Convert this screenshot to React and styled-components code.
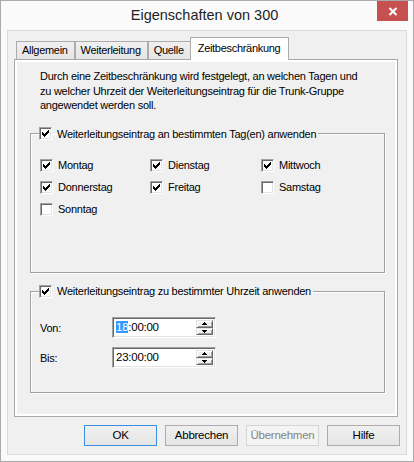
import React from 'react'
import styled, { createGlobalStyle } from 'styled-components'

const ui = `"Liberation Sans", Arial, sans-serif`

const GlobalStyle = createGlobalStyle`
  html, body {
    margin: 0;
    padding: 0;
    background: #fff;
  }
  * { box-sizing: border-box; }
`

const Window = styled.div`
  width: 414px;
  height: 462px;
  border: 1px solid #aaaaaa;
  background: #fafafa;
  display: flex;
  flex-direction: column;
  font-family: ${ui};
  font-size: 11px;
  letter-spacing: -0.25px;
  color: #000;
`

const TitleBar = styled.div`
  height: 29px;
  display: grid;
  grid-template-columns: 1fr auto 1fr;
  align-items: start;
  padding-right: 5px;
`

const Title = styled.div`
  grid-column: 2;
  font-size: 14.5px;
  letter-spacing: 0;
  line-height: 29px;
  color: #1e1e1e;
`

const CloseButton = styled.div`
  grid-column: 3;
  justify-self: end;
  width: 31px;
  height: 20px;
  background: #c75050;
  display: flex;
  align-items: center;
  justify-content: center;
`

const Client = styled.div`
  flex: 1;
  margin: 0 6px 6px;
  border: 1px solid #dadada;
  background: #f0f0f0;
  padding: 6px 8px 8px 6px;
  display: flex;
  flex-direction: column;
`

const TabRow = styled.div`
  height: 22px;
  display: flex;
  align-items: flex-end;
  padding-left: 2px;
`

const Tab = styled.div`
  position: relative;
  height: ${p => (p.$active ? '23px' : '18px')};
  margin-bottom: ${p => (p.$active ? '-1px' : '0')};
  z-index: ${p => (p.$active ? 1 : 0)};
  padding: ${p => (p.$active ? '3px 8px 0 7px' : '1px 6px 0 5px')};
  border: 1px solid #acacac;
  border-bottom: none;
  margin-left: ${p => (p.$active ? '-1px' : '0')};
  background: ${p => (p.$active ? '#fff' : 'linear-gradient(#f0f0f0, #e5e5e5)')};
  font-size: 11px;
  letter-spacing: -0.3px;
  line-height: 15px;
  white-space: nowrap;

  & + & { border-left: ${p => (p.$active ? '1px solid #acacac' : 'none')}; }
`

const Panel = styled.div`
  height: 358px;
  border: 1px solid #a8a8a8;
  background: #fff;
  padding: 2px;
  display: flex;
`

const Page = styled.div`
  flex: 1;
  background: #f0f0f0;
  padding: 7px 10px 0 13px;
  display: flex;
  flex-direction: column;
`

const Intro = styled.p`
  margin: 0;
  padding-left: 10px;
  line-height: 14.5px;
  white-space: nowrap;
`

const Group = styled.fieldset`
  margin: ${p => p.$top}px 0 0;
  padding: 0;
  min-inline-size: 0;
  border: 1px solid #a0a0a0;
  box-shadow: inset 1px 1px 0 #fff, 1px 1px 0 #fff;
`

const Legend = styled.legend`
  margin-left: 8px;
  padding: 0 2px 0 0;
  height: 14px;
  display: flex;
  align-items: center;
  gap: 5px;
  line-height: 14px;
`

const GroupBody = styled.div`
  padding: ${p => p.$pad};
`

const DayGrid = styled.div`
  display: grid;
  grid-template-columns: 110px 111px auto;
  grid-auto-rows: 14px;
  row-gap: 8px;
`

const Option = styled.label`
  display: flex;
  align-items: center;
  gap: 5px;
  line-height: 14px;
`

const Box = styled.span`
  width: 13px;
  height: 13px;
  flex: none;
  background: #fff;
  border: 1px solid;
  border-color: #a0a0a0 #fff #fff #a0a0a0;
  box-shadow: inset 1px 1px 0 #696969, inset -1px -1px 0 #e3e3e3;
  display: flex;
  align-items: center;
  justify-content: center;
`

const TimeRows = styled.div`
  display: flex;
  flex-direction: column;
  gap: 9px;
`

const TimeRow = styled.div`
  display: grid;
  grid-template-columns: 72px 104px;
  align-items: center;
`

const Field = styled.div`
  height: 21px;
  background: #fff;
  border: 1px solid;
  border-color: #a0a0a0 #fff #fff #a0a0a0;
  box-shadow: inset 1px 1px 0 #696969, inset -1px -1px 0 #e3e3e3;
  display: flex;
  padding: 2px;
`

const Value = styled.div`
  flex: 1;
  padding-left: 1px;
  font-size: 11.5px;
  line-height: 15px;
`

const Selected = styled.span`
  background: #3399ff;
  color: #fff;
`

const Spin = styled.div`
  width: 17px;
  display: flex;
  flex-direction: column;
`

const SpinButton = styled.div`
  flex: 1;
  background: #f0f0f0;
  border: 1px solid;
  border-color: #e3e3e3 #696969 #696969 #e3e3e3;
  box-shadow: inset 1px 1px 0 #fff, inset -1px -1px 0 #a0a0a0;
  display: flex;
  align-items: center;
  justify-content: center;
`

const Footer = styled.div`
  margin: 8px -2px 0 0;
  display: flex;
  justify-content: flex-end;
  gap: 8px;
`

const Button = styled.div`
  width: 73px;
  height: 21px;
  border: 1px solid ${p => (p.$default ? '#3c8fe0' : p.$disabled ? '#d5d5d5' : '#acacac')};
  background: ${p => (p.$disabled ? '#f4f4f4' : 'linear-gradient(#f0f0f0, #e5e5e5)')};
  color: ${p => (p.$disabled ? '#838383' : '#000')};
  font-size: 11.5px;
  line-height: 19px;
  text-align: center;
`

const CheckMark = () => (
  <svg width="7" height="7" viewBox="0 0 7 7" shapeRendering="crispEdges">
    <path d="M0 2h1v3H0zM1 3h1v3H1zM2 4h1v3H2zM3 3h1v3H3zM4 2h1v3H4zM5 1h1v3H5zM6 0h1v3H6z" fill="#000" />
  </svg>
)

const Check = ({ checked }) => <Box>{checked && <CheckMark />}</Box>

const Arrow = ({ up }) => (
  <svg width="5" height="3" viewBox="0 0 5 3" shapeRendering="crispEdges">
    <path d={up ? 'M2 0h1v1H2zM1 1h3v1H1zM0 2h5v1H0z' : 'M0 0h5v1H0zM1 1h3v1H1zM2 2h1v1H2z'} fill="#000" />
  </svg>
)

const TimeField = ({ children }) => (
  <Field>
    <Value>{children}</Value>
    <Spin>
      <SpinButton><Arrow up /></SpinButton>
      <SpinButton><Arrow /></SpinButton>
    </Spin>
  </Field>
)

const days = [
  ['Montag', true],
  ['Dienstag', true],
  ['Mittwoch', true],
  ['Donnerstag', true],
  ['Freitag', true],
  ['Samstag', false],
  ['Sonntag', false],
]

const tabs = ['Allgemein', 'Weiterleitung', 'Quelle', 'Zeitbeschränkung']

export default function App() {
  return (
    <>
      <GlobalStyle />
      <Window>
        <TitleBar>
          <Title>Eigenschaften von 300</Title>
          <CloseButton>
            <svg width="10" height="9" viewBox="0 0 10 9">
              <path d="M1.5 1 8.5 8M8.5 1 1.5 8" stroke="#fff" strokeWidth="2" />
            </svg>
          </CloseButton>
        </TitleBar>
        <Client>
          <TabRow>
            {tabs.map((t, i) => (
              <Tab key={t} $active={i === tabs.length - 1}>{t}</Tab>
            ))}
          </TabRow>
          <Panel>
            <Page>
              <Intro>
                Durch eine Zeitbeschränkung wird festgelegt, an welchen Tagen und<br />
                zu welcher Uhrzeit der Weiterleitungseintrag für die Trunk-Gruppe<br />
                angewendet werden soll.
              </Intro>
              <Group $top={14}>
                <Legend><Check checked />Weiterleitungseintrag an bestimmten Tag(en) anwenden</Legend>
                <GroupBody $pad="17.5px 0 56px 9px">
                  <DayGrid>
                    {days.map(([name, on]) => (
                      <Option key={name}><Check checked={on} />{name}</Option>
                    ))}
                  </DayGrid>
                </GroupBody>
              </Group>
              <Group $top={11}>
                <Legend><Check checked />Weiterleitungseintrag zu bestimmter Uhrzeit anwenden</Legend>
                <GroupBody $pad="19px 0 24px 9px">
                  <TimeRows>
                    <TimeRow>
                      <span>Von:</span>
                      <TimeField><Selected>18</Selected>:00:00</TimeField>
                    </TimeRow>
                    <TimeRow>
                      <span>Bis:</span>
                      <TimeField>23:00:00</TimeField>
                    </TimeRow>
                  </TimeRows>
                </GroupBody>
              </Group>
            </Page>
          </Panel>
          <Footer>
            <Button $default>OK</Button>
            <Button>Abbrechen</Button>
            <Button $disabled>Übernehmen</Button>
            <Button>Hilfe</Button>
          </Footer>
        </Client>
      </Window>
    </>
  )
}
